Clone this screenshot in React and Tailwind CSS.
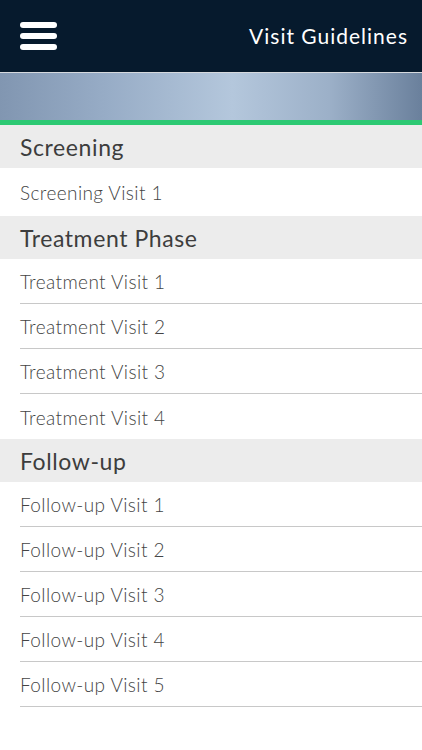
import React from "react";

const SECTIONS = [
  { title: "Screening", items: ["Screening Visit 1"], tall: true },
  {
    title: "Treatment Phase",
    items: ["Treatment Visit 1", "Treatment Visit 2", "Treatment Visit 3", "Treatment Visit 4"],
  },
  {
    title: "Follow-up",
    items: [
      "Follow-up Visit 1",
      "Follow-up Visit 2",
      "Follow-up Visit 3",
      "Follow-up Visit 4",
      "Follow-up Visit 5",
    ],
    last: true,
  },
];

function MenuIcon() {
  return (
    <div className="flex flex-col gap-[5px] w-[37px]">
      <span className="block h-[6px] rounded-full bg-white" />
      <span className="block h-[6px] rounded-full bg-white" />
      <span className="block h-[6px] rounded-full bg-white" />
    </div>
  );
}

export default function App() {
  return (
    <div className="w-[422px] h-[750px] bg-white font-['Lato','Noto_Sans',sans-serif] overflow-hidden">
      {/* Top bar */}
      <div className="h-[72px] bg-[#061a2d] flex items-center justify-between pl-5 pr-[14px]">
        <MenuIcon />
        <h1 className="text-white text-[21px] tracking-[1px]">Visit Guidelines</h1>
      </div>
      <div className="h-px bg-[#d5d9de]" />

      {/* Banner */}
      <div className="h-[47px] bg-[linear-gradient(90deg,#8196b1_0%,#97acc6_25%,#b4c7dc_55%,#9cb0c8_78%,#6a809c_100%)]" />
      <div className="h-[5px] bg-[#2dc973]" />

      {/* List */}
      {SECTIONS.map((section) => (
        <div key={section.title}>
          <div className="h-[43px] bg-[#ececec] flex items-center px-5 pt-[2px]">
            <h2 className="text-[23px] text-[#3d3d3d] tracking-[0.6px]">{section.title}</h2>
          </div>
          {section.items.map((item, i) => {
            const isLast = i === section.items.length - 1;
            const border = !isLast || section.last;
            return (
              <div key={item} className="pl-5">
                <div
                  className={`${section.tall ? "h-[48px]" : "h-[45px]"} flex items-center pt-[3px] ${
                    border ? "border-b border-[#c8c8c8]" : ""
                  }`}
                >
                  <span className="text-[19px] text-[#444] font-light tracking-[0.4px]">{item}</span>
                </div>
              </div>
            );
          })}
        </div>
      ))}
    </div>
  );
}
